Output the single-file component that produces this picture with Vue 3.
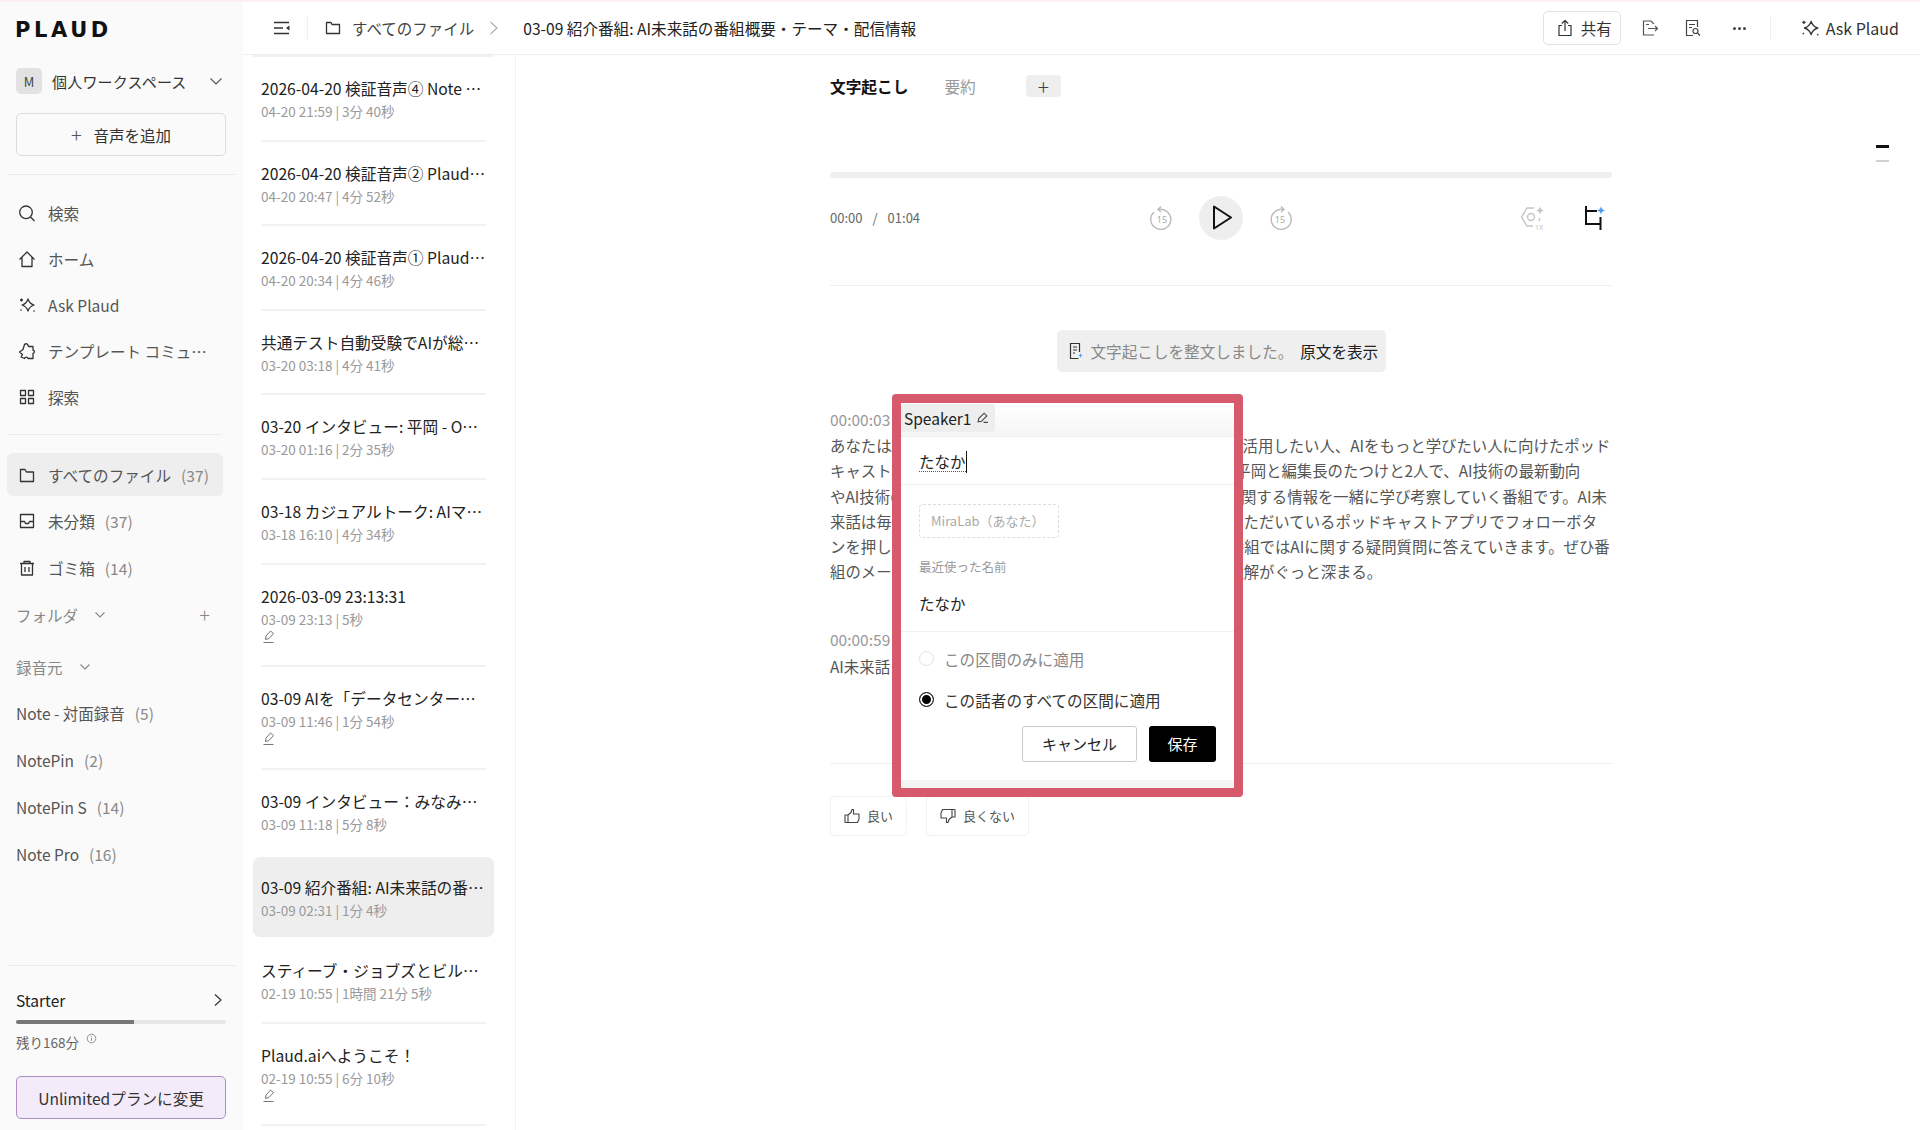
<script setup>
const starPath = 'M10 3c1 3.500 2.300 4.800 6 6-3.700 1.200-5 2.500-6 6-1-3.500-2.300-4.800-6-6 3.700-1.200 5-2.500 6-6ZM3.500 2.500v3M2 4h3M15.500 14.500l1 1M2.500 14.500l1-1'

const navItems = [
  { label: '検索', d: 'M8 2a6.300 6.300 0 1 0 0 12.600A6.300 6.300 0 0 0 8 2ZM12.500 13l4 4' },
  { label: 'ホーム', d: 'M1.500 9.500 9 2l7.500 7.500M4 7.500V16.500h10V7.500' },
  { label: 'Ask Plaud', d: starPath },
  { label: 'テンプレート コミュ…', d: 'M6.500 2.500c1.500-1.500 3.500-.5 3.500 1l.5 1h4.500v3.500c1.800.5 1.800 3 0 3.500v5H10c-.5-1.800-3-1.800-3.500 0L3 15l1.500-2.500L1.500 10 5 7.500l1.500-5Z' },
  { label: '探索', d: 'M2.500 2.500h5v5h-5zM10.500 2.500h5v5h-5zM2.500 10.500h5v5h-5zM10.500 10.500h5v5h-5z' },
]

const folderItems = [
  { label: 'すべてのファイル', count: '(37)', active: true, d: 'M2.500 5V15.500h13V6H8.500L7 3.500H2.500V5Z' },
  { label: '未分類', count: '(37)', d: 'M2.500 2.500h13v13h-13zM2.500 9.500h4l1 2h3l1-2h4' },
  { label: 'ゴミ箱', count: '(14)', d: 'M2 4.500h14M6 4.500V2.500h6v2M3.500 4.500V16h11V4.500M7 8v5M11 8v5' },
]

const sources = [
  { label: 'Note - 対面録音', count: '(5)' },
  { label: 'NotePin', count: '(2)' },
  { label: 'NotePin S', count: '(14)' },
  { label: 'Note Pro', count: '(16)' },
]

const files = [
  { title: '2026-04-20 検証音声④ Note 検証用の録音データ', meta: '04-20 21:59 | 3分 40秒' },
  { title: '2026-04-20 検証音声② Plaud 検証用の録音データ', meta: '04-20 20:47 | 4分 52秒' },
  { title: '2026-04-20 検証音声① Plaud 検証用の録音データ', meta: '04-20 20:34 | 4分 46秒' },
  { title: '共通テスト自動受験でAIが総合点を更新した話', meta: '03-20 03:18 | 4分 41秒' },
  { title: '03-20 インタビュー: 平岡 - Open AIの話題について', meta: '03-20 01:16 | 2分 35秒' },
  { title: '03-18 カジュアルトーク: AIマーケティングの話題', meta: '03-18 16:10 | 4分 34秒' },
  { title: '2026-03-09 23:13:31', meta: '03-09 23:13 | 5秒', pen: true },
  { title: '03-09 AIを「データセンター」と呼ぶ理由について', meta: '03-09 11:46 | 1分 54秒', pen: true },
  { title: '03-09 インタビュー：みなみさんの経験と活動について', meta: '03-09 11:18 | 5分 8秒', beforeActive: true },
  { title: '03-09 紹介番組: AI未来話の番組概要・テーマ・配信情報', meta: '03-09 02:31 | 1分 4秒', active: true },
  { title: 'スティーブ・ジョブズとビル・ゲイツの対談について', meta: '02-19 10:55 | 1時間 21分 5秒' },
  { title: 'Plaud.aiへようこそ！', meta: '02-19 10:55 | 6分 10秒', pen: true },
]

const transcriptLines = [
  'あなたはAIの最新情報を知りたい人、AIを仕事や日常生活で活用したい人、AIをもっと学びたい人に向けたポッド',
  'キャスト、AI未来話へようこそ。この番組では、MCの私、平岡と編集長のたつけと2人で、AI技術の最新動向',
  'やAI技術の活用事例、最新のAIツールの使い方などの、AIに関する情報を一緒に学び考察していく番組です。AI未',
  '来話は毎週配信しています。ぜひご視聴の際は、今ご利用いただいているポッドキャストアプリでフォローボタ',
  'ンを押してぜひチェックしてください。また、今後はこの番組ではAIに関する疑問質問に答えていきます。ぜひ番',
  '組のメールマガジンに登録すれば、番組がより楽しめて、理解がぐっと深まる。',
]
</script>

<template>
  <div class="app">
    <aside class="sidebar">
      <div class="logo">PLAUD</div>
      <div class="workspace">
        <span class="avatar">M</span>
        <span class="workspace-name">個人ワークスペース</span>
        <svg class="workspace-caret" width="14" height="14" viewBox="0 0 14 14" fill="none" stroke="#555" stroke-width="1.100"><path d="M1.500 4.500 7 10l5.500-5.500" /></svg>
      </div>
      <button class="add-btn"><span class="add-plus">+</span>音声を追加</button>
      <div class="side-sep"></div>

      <nav class="nav">
        <div v-for="item in navItems" :key="item.label" class="nav-row">
          <svg width="18" height="18" viewBox="0 0 18 18" fill="none" stroke="#333" stroke-width="1.300" stroke-linejoin="round">
            <path :d="item.d" />
          </svg>
          <span>{{ item.label }}</span>
        </div>
      </nav>

      <div class="side-sep short"></div>

      <div class="folders">
        <div v-for="item in folderItems" :key="item.label" class="nav-row folder-row" :class="{ active: item.active }">
          <svg width="18" height="18" viewBox="0 0 18 18" fill="none" stroke="#333" stroke-width="1.300" stroke-linejoin="round">
            <path :d="item.d" />
          </svg>
          <span>{{ item.label }}</span>
          <span class="count">{{ item.count }}</span>
        </div>
      </div>

      <div class="group-head folder-head">
        <span>フォルダ</span>
        <svg width="12" height="12" viewBox="0 0 12 12" fill="none" stroke="#888" stroke-width="1.100"><path d="M1.500 3.500 6 8l4.500-4.500" /></svg>
        <span class="group-plus">+</span>
      </div>
      <div class="group-head source-head">
        <span>録音元</span>
        <svg width="12" height="12" viewBox="0 0 12 12" fill="none" stroke="#888" stroke-width="1.100"><path d="M1.500 3.500 6 8l4.500-4.500" /></svg>
      </div>
      <div v-for="item in sources" :key="item.label" class="source-row">
        <span>{{ item.label }}</span>
        <span class="count">{{ item.count }}</span>
      </div>

      <div class="side-bottom">
        <div class="side-sep bottom-sep"></div>
        <div class="plan-row">
          <span>Starter</span>
          <svg width="12" height="14" viewBox="0 0 12 14" fill="none" stroke="#333" stroke-width="1.200"><path d="M3 1.500 9 7l-6 5.500" /></svg>
        </div>
        <div class="quota-track"><div class="quota-fill" :style="{ width: '56%' }"></div></div>
        <div class="quota-text">
          残り168分
          <svg width="11" height="11" viewBox="0 0 11 11" fill="none" stroke="#777" stroke-width="0.800"><circle cx="5.500" cy="5.500" r="4.300" /><path d="M5.500 4.800v3M5.500 3v.8" /></svg>
        </div>
        <button class="upgrade-btn">Unlimitedプランに変更</button>
      </div>
    </aside>

    <div class="workspace-area">
      <header class="topbar">
        <svg class="toggle-icon" width="18" height="16" viewBox="0 0 18 16" fill="none" stroke="#333" stroke-width="1.300"><path d="M1 2.500h15M1 8h9M1 13.500h15" /><path d="M16.500 5.500v5L13 8Z" fill="#333" stroke="none" /></svg>
        <span class="top-divider"></span>
        <svg class="crumb-folder" width="16" height="16" viewBox="0 0 16 16" fill="none" stroke="#333" stroke-width="1.300" stroke-linejoin="round"><path d="M1.500 3v10.500h13V4.500H7L6 2.500H1.500V3Z" /></svg>
        <span class="crumb">すべてのファイル</span>
        <svg class="crumb-arrow" width="10" height="16" viewBox="0 0 10 16" fill="none" stroke="#aaa" stroke-width="1.100"><path d="M1.500 2 8 8l-6.500 6" /></svg>
        <span class="crumb-title">03-09 紹介番組: AI未来話の番組概要・テーマ・配信情報</span>

        <div class="top-actions">
          <button class="share-btn">
            <svg width="16" height="18" viewBox="0 0 16 18" fill="none" stroke="#333" stroke-width="1.200"><path d="M5 6.500H2v10h12v-10h-3M8 12V1.500M4.800 4.500 8 1.500l3.200 3" /></svg>
            共有
          </button>
          <svg class="act-icon" width="18" height="18" viewBox="0 0 18 18" fill="none" stroke="#555" stroke-width="1.200"><path d="M13 5 10 2H2.500v14H13M7 9.500h9.500M14 7l2.500 2.500L14 12M5 5.500h3" /></svg>
          <svg class="act-icon" width="18" height="18" viewBox="0 0 18 18" fill="none" stroke="#444" stroke-width="1.200"><path d="M9 16.500H2.500v-15h11V8M5 5.500h6M5 8.500h3" /><circle cx="11.500" cy="12" r="2.500" /><path d="m13.500 14 2.500 2.500" /></svg>
          <span class="more-dots"><i></i><i></i><i></i></span>
          <span class="top-divider action-divider"></span>
          <span class="ask-btn">
            <svg width="20" height="20" viewBox="0 0 18 18" fill="none" stroke="#333" stroke-width="1.200" stroke-linejoin="round"><path :d="starPath" /></svg>
            Ask Plaud
          </span>
        </div>
      </header>

      <div class="panes">
        <section class="file-list">
          <div v-for="file in files" :key="file.title" class="file-wrap">
            <div class="file-item" :class="{ active: file.active }">
              <div class="file-title">{{ file.title }}</div>
              <div class="file-meta">{{ file.meta }}</div>
              <svg v-if="file.pen" class="file-pen" width="14" height="15" viewBox="0 0 14 15" fill="none" stroke="#777" stroke-width="1"><path d="M3.500 10.500 4 7l4.500-5 3 2.500-4.500 5-3.500 1ZM1.500 13.500h10" /></svg>
            </div>
            <div class="file-sep" :class="{ hidden: file.active || file.beforeActive }"></div>
          </div>
        </section>

        <main class="detail">
          <div class="tabs">
            <span class="tab current">文字起こし</span>
            <span class="tab">要約</span>
            <span class="tab-add">+</span>
          </div>

          <div class="progress"></div>

          <div class="player">
            <div class="time">00:00<span class="time-slash">/</span>01:04</div>
            <div class="player-mid">
              <svg width="24" height="26" viewBox="0 0 24 26" fill="none" stroke="#bbb" stroke-width="1.400">
                <path d="M9 4.500a10 10 0 1 1-5 2.500M11 1.500 8 4.500l3 2.500" />
                <text x="12" y="17.500" text-anchor="middle" class="skip-num">15</text>
              </svg>
              <span class="play-btn">
                <svg width="21" height="25" viewBox="0 0 21 25" fill="none" stroke="#111" stroke-width="2" stroke-linejoin="round"><path d="M2 1.500v22L19 12.500Z" /></svg>
              </span>
              <svg width="24" height="26" viewBox="0 0 24 26" fill="none" stroke="#bbb" stroke-width="1.400">
                <path d="M15 4.500a10 10 0 1 0 5 2.500M13 1.500l3 3-3 2.500" />
                <text x="12" y="17.500" text-anchor="middle" class="skip-num">15</text>
              </svg>
            </div>
            <div class="player-right">
              <svg width="28" height="28" viewBox="0 0 28 28" fill="none" stroke="#c4c4c4" stroke-width="1.400">
                <path d="M15 4H8L2.500 13 8 22h6M21 14l-1 3" />
                <circle cx="12" cy="13" r="3.500" />
                <path d="M21 2c.5 3 1.500 4 4 4.500-2.500.5-3.500 1.500-4 4.500-.5-3-1.500-4-4-4.500 2.500-.5 3.500-1.500 4-4.500Z" fill="#c4c4c4" stroke="none" />
                <text x="20" y="26" text-anchor="middle" class="speed-num">1X</text>
              </svg>
              <svg width="24" height="26" viewBox="0 0 24 26" fill="none" stroke="#111" stroke-width="2">
                <path d="M4 1v18h14.500M4 6h11M18.500 12v13" />
                <path d="M19 1c.5 3 1.300 3.800 4.500 4.500-3.200.7-4 1.500-4.500 4.500-.5-3-1.300-3.800-4.500-4.500 3.200-.7 4-1.500 4.500-4.500Z" fill="#4a9cf5" stroke="none" />
              </svg>
            </div>
          </div>

          <div class="rule"></div>

          <div class="notice">
            <svg width="16" height="18" viewBox="0 0 16 18" fill="none" stroke="#333" stroke-width="1.200"><path d="M10.500 16.500h-8v-15h9V10M5 5h4M5 8h4M5 11h2" /><path d="M12.500 11c.3 1.700.8 2.200 2.500 2.500-1.700.3-2.200.8-2.500 2.500-.3-1.700-.8-2.200-2.500-2.500 1.700-.3 2.200-.8 2.500-2.500Z" fill="#4a9cf5" stroke="none" /></svg>
            <span class="notice-text">文字起こしを整文しました。</span>
            <span class="notice-link">原文を表示</span>
          </div>

          <div class="transcript">
            <div class="stamp">00:00:03</div>
            <div v-for="line in transcriptLines" :key="line" class="line">{{ line }}</div>
            <div class="stamp second">00:00:59</div>
            <div class="line">AI未来話</div>

            <div class="speaker-pop">
              <div class="pop-head">
                <span class="speaker-chip">
                  Speaker1
                  <svg width="13" height="13" viewBox="0 0 12 12" fill="none" stroke="#444" stroke-width="1"><path d="m2 10 .5-3 5-5 2.500 2.500-5 5-3 .5ZM7 10.500h4" /></svg>
                </span>
              </div>
              <div class="pop-input"><span class="typed">たなか</span><span class="caret"></span></div>
              <div class="pop-names">
                <span class="me-chip">MiraLab（あなた）</span>
                <div class="recent-label">最近使った名前</div>
                <div class="recent-name">たなか</div>
              </div>
              <div class="pop-scope">
                <label class="radio-row muted"><span class="radio"></span>この区間のみに適用</label>
                <label class="radio-row"><span class="radio on"></span>この話者のすべての区間に適用</label>
                <div class="pop-actions">
                  <button class="btn-cancel">キャンセル</button>
                  <button class="btn-save">保存</button>
                </div>
              </div>
              <div class="pop-foot"></div>
            </div>
          </div>

          <div class="rule feedback-rule"></div>

          <div class="feedback">
            <button class="fb-btn">
              <svg width="16" height="16" viewBox="0 0 16 16" fill="none" stroke="#444" stroke-width="1.100" stroke-linejoin="round"><path d="M1 7h3v7.500H1zM4 7l3-2.500L8 1.500h1.500V6H15v5l-1.500 3.500H4" /></svg>
              良い
            </button>
            <button class="fb-btn">
              <svg width="16" height="16" viewBox="0 0 16 16" fill="none" stroke="#444" stroke-width="1.100" stroke-linejoin="round"><path d="M15 9h-3V1.500h3zM12 9l-3 2.500L8 14.500H6.500V10H1V5l1.500-3.500H12" /></svg>
              良くない
            </button>
          </div>
        </main>

        <div class="minimap"><i class="mark"></i><i class="mark dim"></i></div>
      </div>
    </div>
  </div>
</template>

<style>
html,
body {
  margin: 0;
  background: #fff;
}
</style>

<style scoped>
.app {
  display: flex;
  width: 1920px;
  height: 1130px;
  overflow: hidden;
  border-top: 2px solid #fdf0f1;
  box-sizing: border-box;
  font-family: "Noto Sans CJK JP", "Noto Sans", sans-serif;
  color: #222;
  background: #fff;
}

button {
  font-family: inherit;
  cursor: pointer;
}

.sidebar {
  display: flex;
  flex-direction: column;
  width: 243px;
  flex-shrink: 0;
  background: #fafafa;
}

.logo {
  margin: 15px 0 0 15px;
  height: 26px;
  font-family: "DejaVu Sans", sans-serif;
  font-size: 21px;
  line-height: 26px;
  font-weight: 700;
  letter-spacing: 3.600px;
  color: #111;
}

.workspace {
  display: flex;
  align-items: center;
  margin: 25px 0 0 16px;
  width: 207px;
  font-size: 15px;
  color: #333;
}

.avatar {
  display: flex;
  align-items: center;
  justify-content: center;
  width: 26px;
  height: 26px;
  margin-right: 10px;
  border-radius: 5px;
  background: #e2e2e2;
  font-size: 13px;
  color: #444;
}

.workspace-caret {
  margin-left: auto;
}

.workspace-name {
  letter-spacing: 0.2px;
}

.add-btn {
  display: flex;
  align-items: center;
  justify-content: center;
  margin: 19px 0 0 16px;
  width: 210px;
  height: 43px;
  border: 1px solid #dcdcdc;
  border-radius: 5px;
  background: #fafafa;
  font-size: 15.500px;
  color: #333;
}

.add-plus {
  margin-right: 12px;
  font-size: 20px;
  line-height: 20px;
  font-weight: 300;
  color: #555;
}

.side-sep {
  height: 1px;
  margin: 18px 7px 0 8px;
  background: #ececec;
}

.nav {
  margin-top: 15px;
}

.nav-row {
  display: flex;
  align-items: center;
  height: 46px;
  padding-left: 18px;
  font-size: 15.600px;
  color: #555;
}

.nav-row svg {
  margin-right: 12px;
  flex-shrink: 0;
}

.side-sep.short {
  margin: 14px 21px 0 8px;
}

.folders {
  margin-top: 18px;
}

.folder-row {
  width: 216px;
  height: 43px;
  margin: 0 0 3.500px 7px;
  padding-left: 11px;
  box-sizing: border-box;
  border-radius: 6px;
}

.folder-row.active {
  background: #eeeeee;
}

.count {
  margin-left: 10px;
  color: #888;
}

.group-head {
  display: flex;
  align-items: center;
  gap: 16px;
  margin-left: 16px;
  width: 194px;
  font-size: 15.500px;
  color: #888;
}

.folder-head {
  margin-top: 10.500px;
  height: 24px;
}

.source-head {
  margin-top: 28px;
  height: 24px;
}

.group-plus {
  margin-left: auto;
  font-size: 20px;
  line-height: 20px;
  font-weight: 300;
}

.source-row {
  display: flex;
  align-items: center;
  height: 46.800px;
  margin-left: 16px;
  font-size: 15.500px;
  color: #555;
}

.source-head + .source-row {
  margin-top: 11px;
}

.side-bottom {
  margin-top: auto;
}

.bottom-sep {
  margin: 0 7px 0 8px;
}

.plan-row {
  display: flex;
  align-items: center;
  justify-content: space-between;
  margin: 22px 19px 0 16px;
  height: 24px;
  font-size: 15.500px;
  color: #222;
}

.quota-track {
  height: 4px;
  margin: 8px 17px 0 16px;
  border-radius: 2px;
  background: #e6e6e6;
  overflow: hidden;
}

.quota-fill {
  height: 100%;
  background: #777;
}

.quota-text {
  display: flex;
  align-items: flex-start;
  gap: 7px;
  margin: 7px 0 0 16px;
  height: 22px;
  line-height: 22px;
  font-size: 13.500px;
  color: #666;
}

.quota-text svg {
  margin-top: 2px;
}

.upgrade-btn {
  display: block;
  margin: 23px 0 11px 16px;
  width: 210px;
  height: 43px;
  border: 1px solid #ab8fc4;
  border-radius: 5px;
  background: #f3ebf9;
  font-size: 15.600px;
  color: #333;
}

.workspace-area {
  flex: 1;
  min-width: 0;
  display: flex;
  flex-direction: column;
}

.topbar {
  display: flex;
  align-items: center;
  height: 53px;
  flex-shrink: 0;
  box-sizing: border-box;
  border-bottom: 1px solid #eeeeee;
  padding-left: 30px;
  font-size: 15.500px;
}

.top-divider {
  width: 1px;
  height: 24px;
  margin-left: 16px;
  background: #f0f0f0;
}

.crumb-folder {
  margin-left: 17px;
}

.crumb {
  margin-left: 11px;
  color: #444;
}

.crumb-arrow {
  margin-left: 15px;
}

.crumb-title {
  margin-left: 24px;
  font-size: 15.600px;
  color: #222;
}

.top-actions {
  display: flex;
  align-items: center;
  margin-left: auto;
  padding-right: 21px;
}

.share-btn {
  display: flex;
  align-items: center;
  gap: 8px;
  height: 34px;
  width: 78px;
  padding: 0 0 0 13px;
  border: 1px solid #e2e2e2;
  border-radius: 5px;
  background: #fff;
  font-size: 15.500px;
  color: #333;
}

.act-icon {
  margin-left: 20px;
}

.act-icon + .act-icon {
  margin-left: 25px;
}

.more-dots {
  display: flex;
  gap: 2px;
  margin-left: 31px;
}

.more-dots i {
  width: 3px;
  height: 3px;
  border-radius: 50%;
  background: #444;
}

.action-divider {
  margin-left: 24px;
}

.ask-btn {
  display: flex;
  align-items: center;
  gap: 6px;
  margin-left: 29px;
  font-size: 16px;
  color: #333;
}

.panes {
  flex: 1;
  min-height: 0;
  display: flex;
  position: relative;
}

.file-list {
  width: 273px;
  flex-shrink: 0;
  box-sizing: border-box;
  padding: 0 21px 0 10px;
  border-right: 1px solid #f2f2f2;
  overflow: hidden;
}

.file-wrap:first-child {
  border-top: 2px solid #f2f2f2;
}

.file-item {
  padding: 21px 8px 18.600px;
  box-sizing: border-box;
}

.file-item.active {
  margin-top: 2.800px;
  padding-top: 20px;
  padding-bottom: 16.800px;
  border-radius: 7px;
  background: #eeeeee;
}

.file-title {
  width: 226px;
  height: 22px;
  font-size: 15.700px;
  line-height: 22px;
  color: #222;
  white-space: nowrap;
  overflow: hidden;
  text-overflow: ellipsis;
}

.file-meta {
  margin-top: 1px;
  height: 20px;
  font-size: 13.500px;
  line-height: 20px;
  color: #999;
}

.file-pen {
  display: block;
  height: 15px;
  margin: 0 0 3px 1px;
}

.file-sep {
  height: 2px;
  margin: 0 8px;
  background: #f2f2f2;
}

.file-sep.hidden {
  background: transparent;
}

.detail {
  width: 782px;
  margin-left: 314px;
  flex-shrink: 0;
}

.tabs {
  display: flex;
  align-items: center;
  height: 24px;
  margin-top: 19px;
}

.tab {
  font-size: 15.700px;
  color: #999;
  margin-right: 50px;
}

.tab.current {
  margin-right: 36px;
  font-weight: 700;
  color: #111;
}

.tab-add {
  display: flex;
  align-items: center;
  justify-content: center;
  width: 35px;
  height: 22px;
  border-radius: 4px;
  background: #eeeeee;
  font-size: 21px;
  font-weight: 300;
  color: #444;
}

.progress {
  height: 6px;
  margin-top: 74px;
  border-radius: 3px;
  background: #efefef;
}

.player {
  display: grid;
  grid-template-columns: 1fr auto 1fr;
  align-items: center;
  height: 44px;
  margin-top: 17.500px;
}

.time {
  font-size: 13px;
  color: #666;
}

.time-slash {
  margin: 0 10px;
}

.player-mid {
  display: flex;
  align-items: center;
  gap: 25px;
}

.play-btn {
  display: flex;
  align-items: center;
  justify-content: center;
  width: 44px;
  height: 44px;
  padding-left: 3px;
  box-sizing: border-box;
  border-radius: 50%;
  background: #eeeeee;
}

.skip-num {
  font-family: "Noto Sans", sans-serif;
  font-size: 9px;
  stroke: none;
  fill: #aaa;
}

.speed-num {
  font-family: "Noto Sans", sans-serif;
  font-size: 7px;
  stroke: none;
  fill: #c4c4c4;
}

.player-right {
  display: flex;
  align-items: center;
  justify-content: flex-end;
  gap: 35px;
  padding-right: 6px;
}

.rule {
  height: 1px;
  margin-top: 45px;
  background: #f0f0f0;
}

.notice {
  display: flex;
  align-items: center;
  gap: 7px;
  width: 329px;
  height: 42px;
  margin: 44px auto 0;
  padding-left: 11px;
  box-sizing: border-box;
  border-radius: 5px;
  background: #efefef;
  font-size: 15.600px;
}

.notice-text {
  color: #888;
}

.notice-link {
  color: #222;
}

.transcript {
  position: relative;
  margin-top: 36px;
  font-size: 15.400px;
  color: #555;
}

.stamp {
  height: 25.500px;
  line-height: 23px;
  font-size: 15.500px;
  color: #999;
}

.stamp.second {
  margin-top: 43.500px;
}

.line {
  height: 25.300px;
  line-height: 25.300px;
  white-space: nowrap;
}

.speaker-pop {
  position: absolute;
  left: 62px;
  top: -14px;
  width: 351px;
  height: 403px;
  box-sizing: border-box;
  display: flex;
  flex-direction: column;
  border: 9px solid #d6596c;
  border-radius: 4px;
  background: #fff;
  color: #222;
}

.pop-head {
  height: 33px;
  flex-shrink: 0;
  box-sizing: content-box;
  background: linear-gradient(180deg, #fff 0%, #f5f5f5 100%);
  border-bottom: 1px solid #eeeeee;
}

.speaker-chip {
  display: inline-flex;
  align-items: center;
  gap: 5px;
  height: 28px;
  margin-top: 1px;
  padding: 0 6px 0 3px;
  border-radius: 3px;
  background: #eeeeee;
  font-size: 15.500px;
  color: #222;
}

.pop-input {
  display: flex;
  align-items: center;
  height: 44px;
  padding: 3px 0 0 18px;
  border-bottom: 1px solid #eeeeee;
  font-size: 15.500px;
  flex-shrink: 0;
}

.typed {
  line-height: 20px;
  border-bottom: 1px dotted #555;
}

.caret {
  width: 1px;
  height: 22px;
  background: #111;
}

.pop-names {
  height: 147px;
  padding: 19px 18px 0;
  box-sizing: border-box;
  border-bottom: 1px solid #f2f2f2;
  flex-shrink: 0;
}

.me-chip {
  display: flex;
  align-items: center;
  width: 140px;
  height: 34px;
  padding-left: 11px;
  box-sizing: border-box;
  border: 1px dashed #dddddd;
  border-radius: 4px;
  font-size: 13px;
  color: #aaa;
}

.recent-label {
  margin-top: 19px;
  height: 20px;
  line-height: 20px;
  font-size: 12.500px;
  color: #999;
}

.recent-name {
  margin-top: 15px;
  height: 22px;
  line-height: 22px;
  font-size: 15.500px;
}

.pop-scope {
  padding: 15px 18px 0;
}

.radio-row {
  display: flex;
  align-items: center;
  gap: 10px;
  height: 24px;
  margin-bottom: 17px;
  font-size: 15.600px;
  color: #333;
}

.radio-row.muted {
  color: #888;
}

.radio {
  width: 15px;
  height: 15px;
  box-sizing: border-box;
  border: 1px solid #e2e2e2;
  border-radius: 50%;
  background: #fff;
}

.radio.on {
  border: 1px solid #222;
  box-shadow: inset 0 0 0 2px #fff;
  background: #000;
}

.pop-actions {
  display: flex;
  justify-content: flex-end;
  gap: 12px;
  margin-top: -3px;
}

.btn-cancel {
  width: 115px;
  height: 36px;
  border: 1px solid #cccccc;
  border-radius: 3px;
  background: #fff;
  font-size: 15px;
  color: #222;
}

.btn-save {
  width: 67px;
  height: 36px;
  border: none;
  border-radius: 3px;
  background: #000;
  font-size: 15px;
  color: #fff;
}

.pop-foot {
  margin-top: auto;
  height: 8px;
  background: #f4f4f4;
}

.feedback-rule {
  margin-top: 83.500px;
}

.feedback {
  display: flex;
  gap: 19px;
  margin-top: 32px;
}

.fb-btn {
  display: flex;
  align-items: center;
  justify-content: center;
  gap: 7px;
  height: 40px;
  padding: 0 13px;
  border: 1px solid #f2f2f2;
  border-radius: 5px;
  background: #fff;
  font-size: 13px;
  color: #555;
}

.minimap {
  position: absolute;
  right: 31px;
  top: 90px;
  display: flex;
  flex-direction: column;
  gap: 12px;
}

.mark {
  width: 13px;
  height: 3px;
  background: #111;
}

.mark.dim {
  height: 2px;
  background: #d0d0d0;
}
</style>
